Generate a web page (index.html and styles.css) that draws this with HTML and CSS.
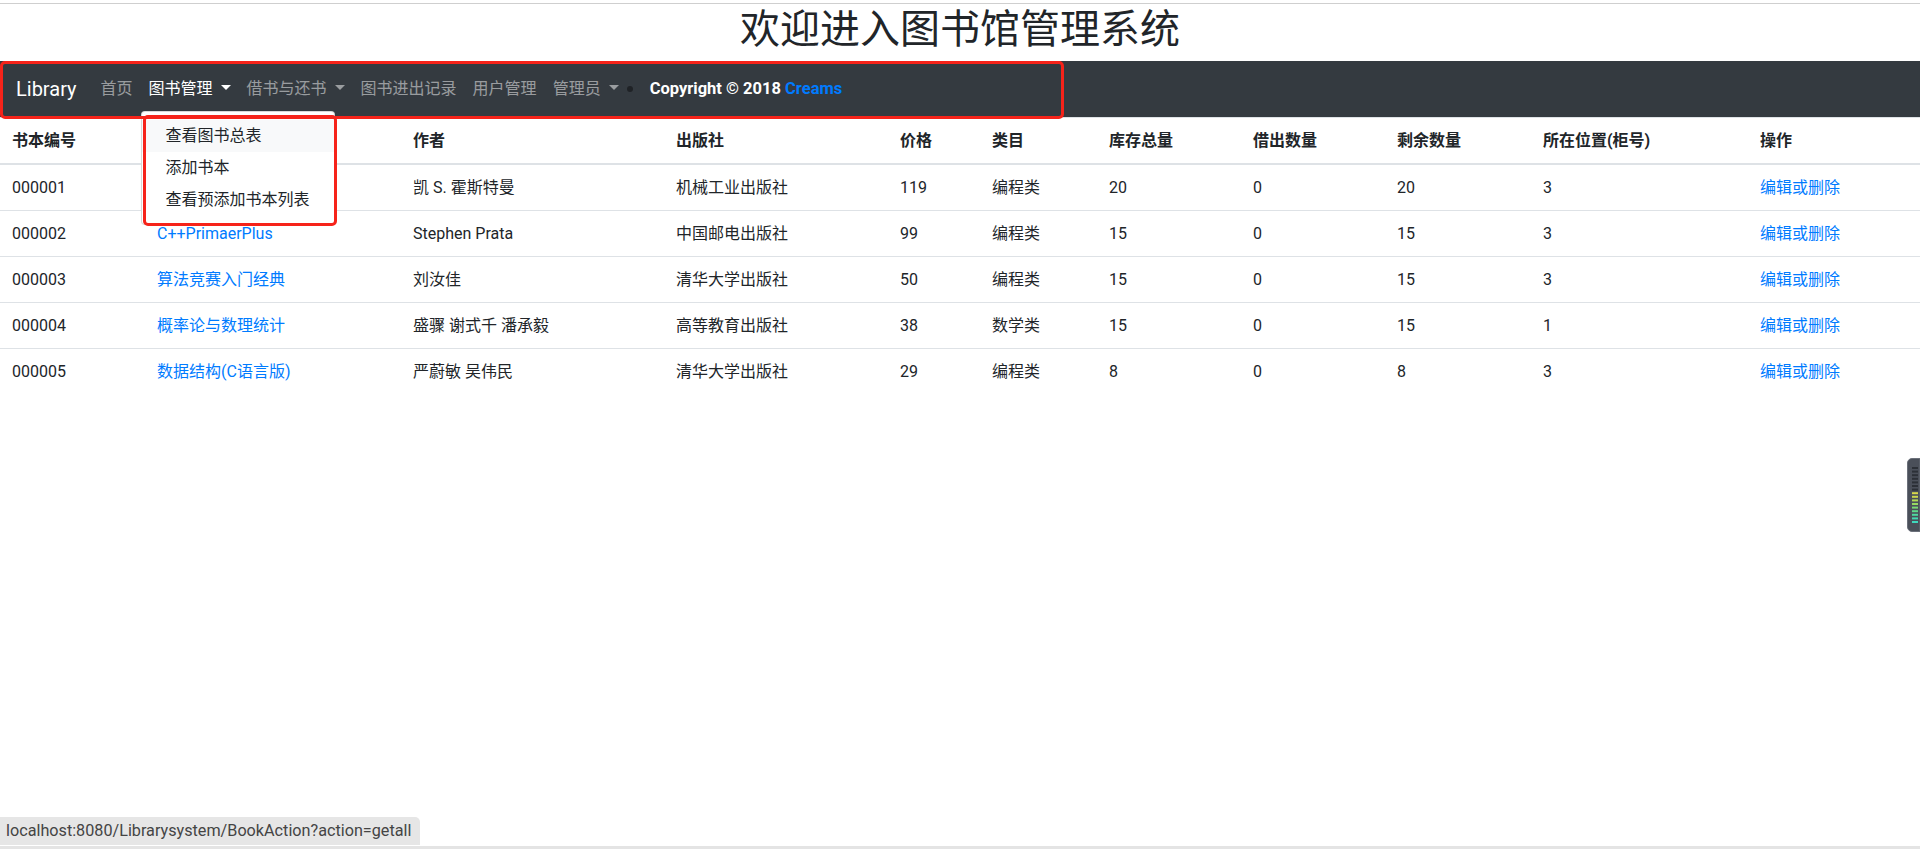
FILE: index.html
```html
<!DOCTYPE html>
<html lang="zh-CN">
<head>
    <meta charset="UTF-8">
    <meta name="viewport" content="width=device-width, initial-scale=1.0">
    <title>图书馆管理系统</title>
    <link rel="stylesheet" href="styles.css">
</head>
<body>
    <div class="page">
        <div class="topline"></div>
        <h1 class="title">欢迎进入图书馆管理系统</h1>

        <nav class="navbar">
            <a class="brand" href="#">Library</a>
            <ul class="nav">
                <li class="nav-item"><a class="nav-link" href="#">首页</a></li>
                <li class="nav-item show">
                    <a class="nav-link toggle" href="#">图书管理</a>
                    <div class="dropdown-menu">
                        <a class="dropdown-item hover" href="#">查看图书总表</a>
                        <a class="dropdown-item" href="#">添加书本</a>
                        <a class="dropdown-item" href="#">查看预添加书本列表</a>
                    </div>
                </li>
                <li class="nav-item"><a class="nav-link toggle" href="#">借书与还书</a></li>
                <li class="nav-item"><a class="nav-link" href="#">图书进出记录</a></li>
                <li class="nav-item"><a class="nav-link" href="#">用户管理</a></li>
                <li class="nav-item"><a class="nav-link toggle" href="#">管理员</a></li>
            </ul>
            <span class="dot"></span>
            <span class="copyright">Copyright © 2018 <a href="#">Creams</a></span>
        </nav>

        <table class="books">
            <colgroup>
                <col class="c-id"><col class="c-name"><col class="c-author"><col class="c-press">
                <col class="c-price"><col class="c-type"><col class="c-total"><col class="c-out">
                <col class="c-left"><col class="c-place"><col class="c-op">
            </colgroup>
            <thead>
                <tr>
                    <th>书本编号</th><th>书名</th><th>作者</th><th>出版社</th><th>价格</th><th>类目</th>
                    <th>库存总量</th><th>借出数量</th><th>剩余数量</th><th>所在位置(柜号)</th><th>操作</th>
                </tr>
            </thead>
            <tbody>
                <tr>
                    <td>000001</td><td><a href="#">Java核心技术</a></td><td>凯 S. 霍斯特曼</td><td>机械工业出版社</td>
                    <td>119</td><td>编程类</td><td>20</td><td>0</td><td>20</td><td>3</td><td><a href="#">编辑或删除</a></td>
                </tr>
                <tr>
                    <td>000002</td><td><a href="#">C++PrimaerPlus</a></td><td>Stephen Prata</td><td>中国邮电出版社</td>
                    <td>99</td><td>编程类</td><td>15</td><td>0</td><td>15</td><td>3</td><td><a href="#">编辑或删除</a></td>
                </tr>
                <tr>
                    <td>000003</td><td><a href="#">算法竞赛入门经典</a></td><td>刘汝佳</td><td>清华大学出版社</td>
                    <td>50</td><td>编程类</td><td>15</td><td>0</td><td>15</td><td>3</td><td><a href="#">编辑或删除</a></td>
                </tr>
                <tr>
                    <td>000004</td><td><a href="#">概率论与数理统计</a></td><td>盛骤 谢式千 潘承毅</td><td>高等教育出版社</td>
                    <td>38</td><td>数学类</td><td>15</td><td>0</td><td>15</td><td>1</td><td><a href="#">编辑或删除</a></td>
                </tr>
                <tr>
                    <td>000005</td><td><a href="#">数据结构(C语言版)</a></td><td>严蔚敏 吴伟民</td><td>清华大学出版社</td>
                    <td>29</td><td>编程类</td><td>8</td><td>0</td><td>8</td><td>3</td><td><a href="#">编辑或删除</a></td>
                </tr>
            </tbody>
        </table>

        <!-- red annotation boxes drawn over the screenshot -->
        <div class="mark mark-nav"></div>
        <div class="mark mark-menu"></div>
    </div>

    <div class="status">localhost:8080/Librarysystem/BookAction?action=getall</div>

    <div class="meter">
        <svg width="13" height="74" viewBox="0 0 13 74">
            <path d="M5 0.5 H13 V73.5 H5 A4.5 4.5 0 0 1 0.5 69 V5 A4.5 4.5 0 0 1 5 0.5 Z" fill="#4a4f59" stroke="#6b707a"/>
            <g fill="#2c3037">
                <rect x="5" y="9" width="6" height="2"/>
                <rect x="5" y="12.6" width="6" height="2"/>
                <rect x="5" y="16.2" width="6" height="2"/>
                <rect x="5" y="19.8" width="6" height="2"/>
                <rect x="5" y="23.4" width="6" height="2"/>
                <rect x="5" y="27" width="6" height="2"/>
                <rect x="5" y="30.6" width="6" height="2"/>
            </g>
            <rect x="5" y="34.2" width="6" height="2" fill="#d8d84c"/>
            <rect x="5" y="37.8" width="6" height="2" fill="#cbd84e"/>
            <rect x="5" y="41.4" width="6" height="2" fill="#b2d856"/>
            <rect x="5" y="45" width="6" height="2" fill="#96d862"/>
            <rect x="5" y="48.6" width="6" height="2" fill="#79d874"/>
            <rect x="5" y="52.2" width="6" height="2" fill="#5fd88a"/>
            <rect x="5" y="55.8" width="6" height="2" fill="#4ed89e"/>
            <rect x="5" y="59.4" width="6" height="2" fill="#44d8b0"/>
            <rect x="5" y="63" width="6" height="2" fill="#3ed8bc"/>
        </svg>
    </div>
    <div class="bottomline"></div>
</body>
</html>
```

FILE: styles.css
```css
* {
    box-sizing: border-box;
}
html, body {
    margin: 0;
}
body {
    font-family: Roboto, "Noto Sans CJK SC", sans-serif;
    font-size: 16px;
    line-height: 1.5;
    color: #212529;
    background: #fff;
}
a {
    color: #007bff;
    text-decoration: none;
}
.page {
    position: relative;
}
.topline {
    height: 1px;
    margin-top: 3px;
    background: #cfcfcf;
}
.title {
    margin: 2px 0 7px;
    font-size: 40px;
    font-weight: 400;
    line-height: 48px;
    text-align: center;
}

/* navbar */
.navbar {
    display: flex;
    align-items: center;
    padding: 8px 16px;
    background: #343a40;
}
.brand {
    padding: 5px 0;
    margin-right: 16px;
    font-size: 20px;
    line-height: 30px;
    color: #fff;
}
.nav {
    display: flex;
    margin: 0;
    padding: 0;
    list-style: none;
}
.nav-item {
    position: relative;
}
.nav-link {
    display: block;
    padding: 8px;
    color: rgba(255,255,255,0.5);
}
.nav-item.show > .nav-link {
    color: #fff;
}
.toggle::after {
    content: "";
    display: inline-block;
    margin-left: 8px;
    vertical-align: 4px;
    border-top: 5px solid;
    border-right: 5px solid transparent;
    border-left: 5px solid transparent;
}
.dropdown-menu {
    position: absolute;
    top: 100%;
    left: 0;
    z-index: 10;
    min-width: 160px;
    margin-top: 2px;
    padding: 8px 0;
    background: #fff;
    border: 1px solid rgba(0,0,0,0.15);
    border-radius: 4px;
}
.dropdown-item {
    display: block;
    padding: 4px 24px;
    color: #212529;
    white-space: nowrap;
}
.dropdown-item.hover {
    background: #f8f9fa;
}
.dot {
    width: 6px;
    height: 6px;
    margin: 0 17px 0 0;
    border-radius: 50%;
    background: #1f2226;
}
.copyright {
    font-size: 16.5px;
    font-weight: 700;
    color: #fff;
}

/* table */
.books {
    width: 100%;
    border-collapse: collapse;
    table-layout: fixed;
}
.books th,
.books td {
    padding: 12px;
    line-height: 21px;
    text-align: left;
    vertical-align: top;
    border-top: 1px solid #dee2e6;
    white-space: nowrap;
}
.books thead th {
    vertical-align: bottom;
    border-bottom: 2px solid #dee2e6;
}
.c-id { width: 145px; }
.c-name { width: 256px; }
.c-author { width: 263px; }
.c-press { width: 224px; }
.c-price { width: 92px; }
.c-type { width: 117px; }
.c-total { width: 144px; }
.c-out { width: 144px; }
.c-left { width: 146px; }
.c-place { width: 217px; }
.c-op { width: 172px; }

/* annotation */
.mark {
    position: absolute;
    z-index: 20;
    border: 3px solid #f6231a;
    border-radius: 5px;
}
.mark-nav {
    left: 0;
    top: 58px;
    width: 1064px;
    height: 58px;
}
.mark-menu {
    left: 143px;
    top: 112px;
    width: 194px;
    height: 111px;
}

/* browser bits */
.status {
    position: fixed;
    left: 0;
    bottom: 4px;
    height: 28px;
    padding: 0 9px 0 6px;
    font-size: 16.2px;
    line-height: 28px;
    color: #444;
    background: #e6e6e6;
    border-top-right-radius: 5px;
}
.meter {
    position: fixed;
    right: 0;
    top: 458px;
    width: 13px;
    height: 74px;
}
.meter svg {
    display: block;
}
.bottomline {
    position: fixed;
    left: 0;
    right: 0;
    bottom: 0;
    height: 3px;
    background: #e4e4e4;
}
```
